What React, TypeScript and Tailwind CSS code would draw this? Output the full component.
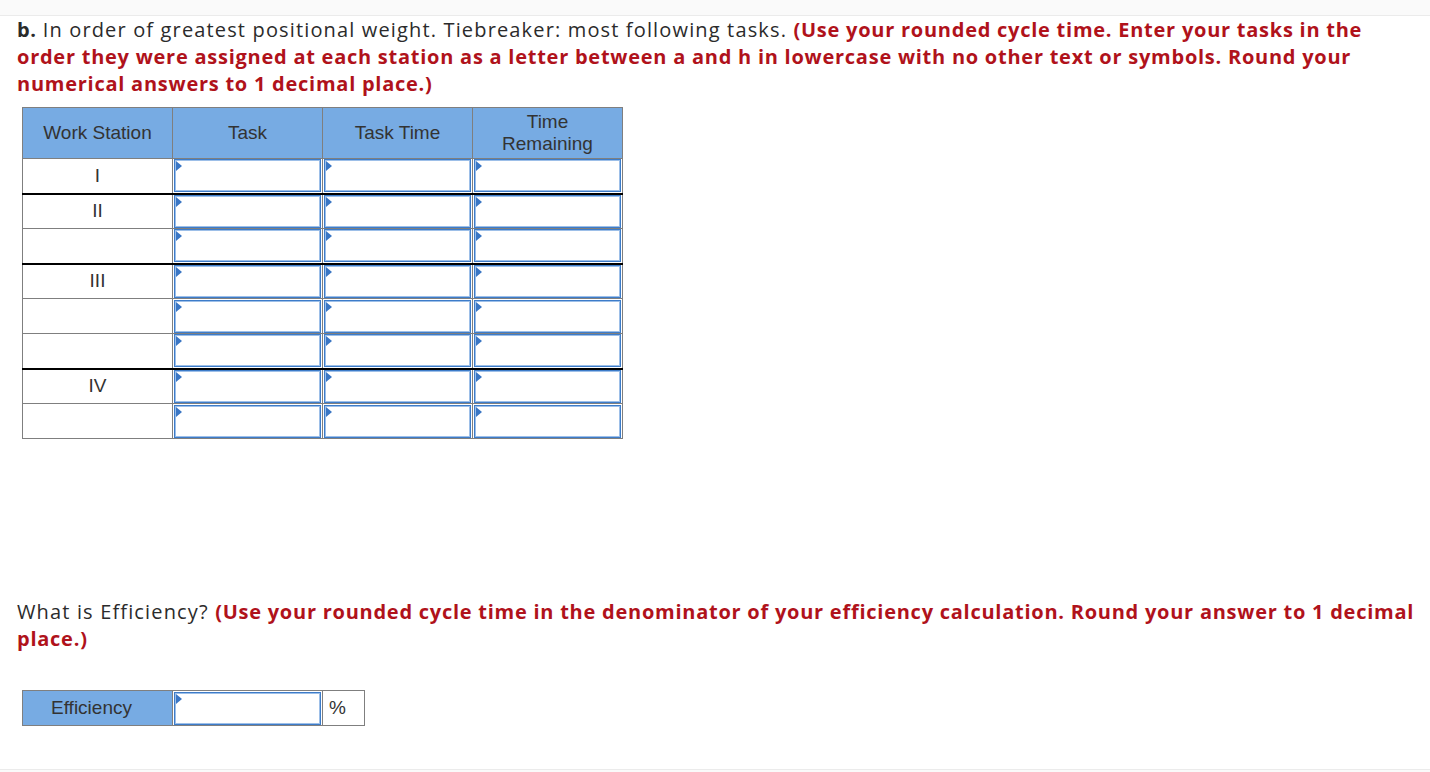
import React from "react";

const Tri = () => (
  <span className="absolute left-[1px] top-[1px] w-0 h-0 border-t-[5px] border-b-[5px] border-l-[6px] border-t-transparent border-b-transparent border-l-[#3a76c4]" />
);

const InputCell = () => (
  <td className="p-0 border border-[#7f7f7f] h-[35px]">
    <div className="relative h-[33px] mx-[1px] border border-[#3d7cc9] shadow-[inset_0_0_0_1px_#9dbfe8] bg-white">
      <Tri />
    </div>
  </td>
);

const rows: { label: string; blackTop: boolean }[] = [
  { label: "I", blackTop: false },
  { label: "II", blackTop: true },
  { label: "", blackTop: false },
  { label: "III", blackTop: true },
  { label: "", blackTop: false },
  { label: "", blackTop: false },
  { label: "IV", blackTop: true },
  { label: "", blackTop: false },
];

export default function App() {
  const sans = { fontFamily: "'Open Sans', Lato, sans-serif" };
  return (
    <div className="w-[1430px] min-h-[772px] bg-white text-[#333]">
      <div className="h-[16px] bg-[#fafafa] border-b border-[#ebebeb]" />
      <div className="pl-[17px] pr-[4px]">
        <p className="text-[20px] leading-[27px] tracking-[1.15px] text-[#2b2b2b]" style={sans}>
          <b className="font-bold tracking-[0.5px]">b.</b> In order of greatest positional weight. Tiebreaker: most following tasks.{" "}
          <b className="font-bold tracking-[0.75px] text-[#b0121b]">
            (Use your rounded cycle time. Enter your tasks in the
            <br />
            order they were assigned at each station as a letter between a and h in lowercase with no other text or symbols. Round your
            <br />
            numerical answers to 1 decimal place.)
          </b>
        </p>
        <table
          className="mt-[10px] ml-[5px] border-collapse table-fixed"
          style={{ fontFamily: "'Liberation Sans', Arial, sans-serif" }}
        >
          <colgroup>
            <col className="w-[150px]" />
            <col className="w-[150px]" />
            <col className="w-[150px]" />
            <col className="w-[150px]" />
          </colgroup>
          <thead>
            <tr className="h-[51px] bg-[#77abe3]">
              <th className="border border-[#7f7f7f] font-normal text-[19px] leading-[22px] text-[#333]">Work Station</th>
              <th className="border border-[#7f7f7f] font-normal text-[19px] leading-[22px] text-[#333]">Task</th>
              <th className="border border-[#7f7f7f] font-normal text-[19px] leading-[22px] text-[#333]">Task Time</th>
              <th className="border border-[#7f7f7f] font-normal text-[19px] leading-[22px] text-[#333]">
                Time
                <br />
                Remaining
              </th>
            </tr>
          </thead>
          <tbody>
            {rows.map((r, i) => (
              <tr key={i} className={r.blackTop ? "border-t-2 border-t-black" : ""}>
                <td className={`border border-[#7f7f7f] h-[35px] p-0 text-center text-[19px] text-[#333] ${r.blackTop ? "border-t-black" : ""}`}>
                  {r.label}
                </td>
                <InputCell />
                <InputCell />
                <InputCell />
              </tr>
            ))}
          </tbody>
        </table>

        <p className="mt-[159px] text-[20px] leading-[27px] tracking-[1.15px] text-[#2b2b2b]" style={sans}>
          What is Efficiency?{" "}
          <b className="font-bold tracking-[0.75px] text-[#b0121b]">
            (Use your rounded cycle time in the denominator of your efficiency calculation. Round your answer to 1 decimal
            <br />
            place.)
          </b>
        </p>

        <table
          className="mt-[38px] ml-[5px] border-collapse table-fixed"
          style={{ fontFamily: "'Liberation Sans', Arial, sans-serif" }}
        >
          <colgroup>
            <col className="w-[150px]" />
            <col className="w-[150px]" />
            <col className="w-[42px]" />
          </colgroup>
          <tbody>
            <tr>
              <td className="border border-[#7f7f7f] h-[35px] p-0 pr-3 bg-[#77abe3] text-center text-[19px] text-[#333]">
                Efficiency
              </td>
              <InputCell />
              <td className="border border-[#7f7f7f] h-[35px] p-0 pl-[6px] text-[19px] text-[#333]">%</td>
            </tr>
          </tbody>
        </table>
      </div>
      <div className="mt-[43px] border-t border-[#ebebeb] h-[4px] bg-[#fafafa]" />
    </div>
  );
}
